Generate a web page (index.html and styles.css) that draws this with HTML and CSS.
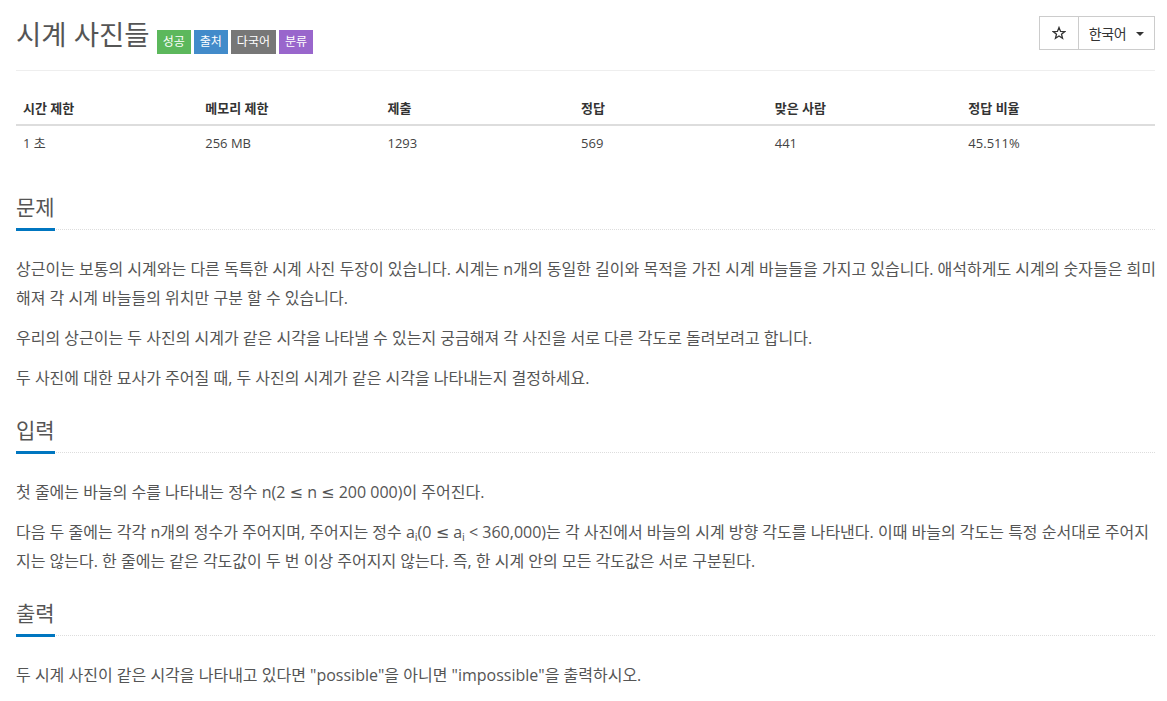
FILE: index.html
```html
<!DOCTYPE html>
<html lang="ko">
<head>
<meta charset="utf-8">
<title>시계 사진들</title>
<link rel="stylesheet" href="styles.css">
</head>
<body>
<div class="container">
  <div class="page-header">
    <h1 class="title">
      <span class="title-text">시계 사진들</span>
      <span class="label label-success">성공</span>
      <span class="label label-primary">출처</span>
      <span class="label label-default">다국어</span>
      <span class="label label-purple">분류</span>
    </h1>
    <div class="btn-group">
      <button class="btn btn-star" aria-label="즐겨찾기">
        <svg width="14" height="14" viewBox="0 0 24 24" aria-hidden="true"><polygon points="12,2.5 14.7,9.2 21.8,9.6 16.3,14.1 18.1,21 12,17.1 5.9,21 7.7,14.1 2.2,9.6 9.3,9.2" fill="none" stroke="#333" stroke-width="2.2" stroke-linejoin="miter"/></svg>
      </button>
      <button class="btn btn-lang">한국어 <span class="caret"></span></button>
    </div>
  </div>

  <table class="info-table">
    <thead>
      <tr>
        <th class="w16">시간 제한</th>
        <th class="w16">메모리 제한</th>
        <th class="w17">제출</th>
        <th class="w17">정답</th>
        <th class="w17">맞은 사람</th>
        <th class="w17">정답 비율</th>
      </tr>
    </thead>
    <tbody>
      <tr>
        <td>1 초</td>
        <td>256 MB</td>
        <td>1293</td>
        <td>569</td>
        <td>441</td>
        <td>45.511%</td>
      </tr>
    </tbody>
  </table>

  <section class="problem-section first">
    <div class="headline"><h2>문제</h2></div>
    <div class="problem-text">
      <p>상근이는 보통의 시계와는 다른 독특한 시계 사진 두장이 있습니다. 시계는 n개의 동일한 길이와 목적을 가진 시계 바늘들을 가지고 있습니다. 애석하게도 시계의 숫자들은 희미해져 각 시계 바늘들의 위치만 구분 할 수 있습니다.</p>
      <p>우리의 상근이는 두 사진의 시계가 같은 시각을 나타낼 수 있는지 궁금해져 각 사진을 서로 다른 각도로 돌려보려고 합니다.</p>
      <p>두 사진에 대한 묘사가 주어질 때, 두 사진의 시계가 같은 시각을 나타내는지 결정하세요.</p>
    </div>
  </section>

  <section class="problem-section">
    <div class="headline"><h2>입력</h2></div>
    <div class="problem-text">
      <p>첫 줄에는 바늘의 수를 나타내는 정수 n(2 <span class="math">≤</span> n <span class="math">≤</span> 200 000)이 주어진다.</p>
      <p>다음 두 줄에는 각각 n개의 정수가 주어지며, 주어지는 정수 a<sub>i</sub>(0 <span class="math">≤</span> a<sub>i</sub> &lt; 360,000)는 각 사진에서 바늘의 시계 방향 각도를 나타낸다. 이때 바늘의 각도는 특정 순서대로 주어지지는 않는다. 한 줄에는 같은 각도값이 두 번 이상 주어지지 않는다. 즉, 한 시계 안의 모든 각도값은 서로 구분된다.</p>
    </div>
  </section>

  <section class="problem-section">
    <div class="headline"><h2>출력</h2></div>
    <div class="problem-text">
      <p>두 시계 사진이 같은 시각을 나타내고 있다면 "possible"을 아니면 "impossible"을 출력하시오.</p>
    </div>
  </section>
</div>
</body>
</html>
```

FILE: styles.css
```css
* { box-sizing: border-box; }

html, body {
  margin: 0;
  padding: 0;
  background: #fff;
}

body {
  font-family: "Open Sans", "Noto Sans CJK KR", sans-serif;
  color: #555;
  font-size: 14px;
}

.container {
  padding: 0 12px 0 16px;
}

.page-header {
  display: flex;
  justify-content: space-between;
  align-items: flex-start;
  border-bottom: 1px solid #eee;
  padding-top: 16px;
  height: 71px;
}

.title {
  margin: 0;
  display: flex;
  align-items: center;
  font-weight: 400;
}

.title-text {
  font-size: 27.5px;
  color: #555;
  line-height: 34px;
  margin-right: 7px;
}

.label {
  display: inline-block;
  font-size: 12px;
  font-weight: 400;
  color: #fff;
  height: 24px;
  line-height: 24px;
  padding: 0 6px;
  margin-right: 3px;
  margin-top: 14px;
}

.label-success { background: #5cb85c; }
.label-primary { background: #428bca; }
.label-default { background: #777; }
.label-purple { background: #9966cc; }

.btn-group {
  display: flex;
}

.btn {
  font-family: "Open Sans", "Noto Sans CJK KR", sans-serif;
  background: #fff;
  border: 1px solid #ccc;
  height: 34px;
  color: #333;
  font-size: 14px;
  margin: 0;
  padding: 0;
  cursor: pointer;
}

.btn-star {
  width: 40px;
  display: flex;
  align-items: center;
  justify-content: center;
}

.btn-star svg {
  display: block;
}

.btn-lang {
  width: 76px;
  border-left: none;
  display: flex;
  align-items: center;
  justify-content: center;
  gap: 10px;
  letter-spacing: -0.3px;
}

.caret {
  display: inline-block;
  width: 0;
  height: 0;
  border-top: 4px solid #333;
  border-left: 4px solid transparent;
  border-right: 4px solid transparent;
  margin-top: 2px;
}

.info-table {
  width: 100%;
  border-collapse: collapse;
  margin-top: 19px;
  font-size: 13px;
  color: #333;
}

.info-table th,
.info-table td {
  text-align: left;
  padding: 8px 7px;
  line-height: 18px;
}

.info-table th {
  font-weight: 700;
  padding-top: 9px;
  padding-bottom: 7px;
  border-bottom: 2px solid #ddd;
}

.info-table td {
  color: #444;
}

.w16 { width: 16%; }
.w17 { width: 17%; }

.problem-section {
  margin-top: 26px;
}

.problem-section.first {
  margin-top: 36px;
}

.headline {
  border-bottom: 1px dotted #ddd;
  margin-bottom: 25px;
  line-height: 0;
}

.headline h2 {
  display: inline-block;
  margin: 0 0 -2px;
  font-size: 21px;
  font-weight: 400;
  line-height: 23px;
  color: #555;
  padding-bottom: 9px;
  border-bottom: 3px solid #0076c0;
}

.problem-text {
  margin-right: -8px;
}

.problem-text p {
  margin: 0 0 11px;
  font-size: 16px;
  line-height: 29px;
}

.problem-text .math {
  font-family: "DejaVu Sans", sans-serif;
}

.problem-text sub {
  font-size: 11px;
  line-height: 0;
  vertical-align: -3px;
}
```
